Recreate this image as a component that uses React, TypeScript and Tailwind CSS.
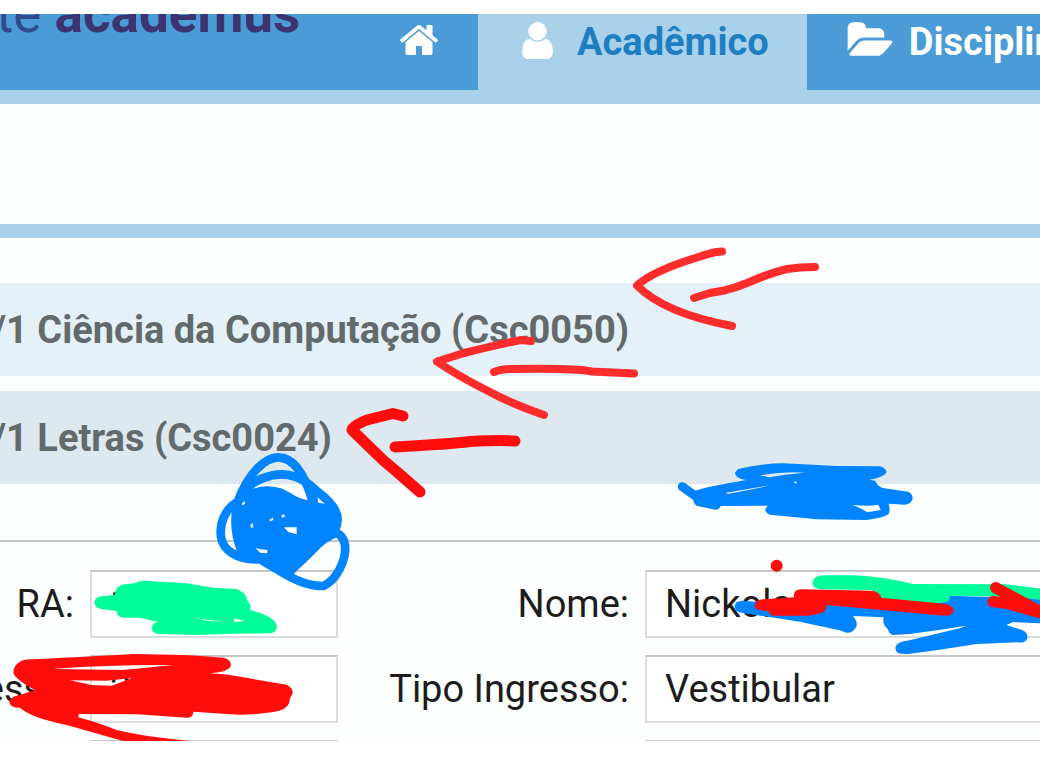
import React from 'react';

const ICONS = {
  home: 'M1472 992v480q0 26-19 45t-45 19h-384v-384h-256v384h-384q-26 0-45-19t-19-45v-480q0-1 .5-3t.5-3l575-474 575 474q1 2 1 6zm223-69l-62 74q-8 9-21 11h-3q-13 0-21-7l-692-577-692 577q-12 8-24 7-13-2-21-11l-62-74q-8-10-7-23.5t11-21.5l719-599q32-26 76-26t76 26l244 204v-195q0-14 9-23t23-9h192q14 0 23 9t9 23v408l219 182q10 8 11 21.5t-7 23.5z',
  user: 'M1536 1399q0 109-62.5 187t-150.5 78h-854q-88 0-150.5-78t-62.5-187q0-85 8.5-160.5t31.5-152 58.5-131 94-89 134.5-34.5q131 128 313 128t313-128q76 0 134.5 34.5t94 89 58.5 131 31.5 152 8.5 160.5zm-256-887q0 159-112.5 271.5t-271.5 112.5-271.5-112.5-112.5-271.5 112.5-271.5 271.5-112.5 271.5 112.5 112.5 271.5z',
  folder:
    'M1879 952q0 31-31 66l-336 396q-43 51-120.5 86.5t-143.5 35.5h-1088q-34 0-60.5-13t-26.5-43q0-31 31-66l336-396q43-51 120.5-86.5t143.5-35.5h1088q34 0 60.5 13t26.5 43zm-343-344v160h-832q-94 0-197 47.5t-164 119.5l-337 396-5 6q0-4-.5-12.5t-.5-12.5v-960q0-92 66-158t158-66h320q92 0 158 66t66 158v32h544q92 0 158 66t66 158z',
};

const courses = [
  { name: '/1 Ciência da Computação (Csc0050)', className: 'bg-[#e4f1f9]' },
  { name: '/1 Letras (Csc0024)', className: 'bg-[#dde8ef]' },
];

const Icon = ({
  path,
  viewBox = '0 0 1792 1792',
  className,
}: {
  path: string;
  viewBox?: string;
  className: string;
}) => (
  <svg
    viewBox={viewBox}
    className={`mb-1 shrink-0 fill-white ${className}`}
    aria-hidden="true"
  >
    <path d={path} />
  </svg>
);

const Field = ({
  id,
  label,
  value,
}: {
  id: string;
  label: string;
  value: string;
}) => (
  <>
    <label
      htmlFor={id}
      className="flex justify-end overflow-hidden whitespace-nowrap"
    >
      {label}
    </label>
    <input
      id={id}
      type="text"
      defaultValue={value}
      className="h-[68px] w-full min-w-0 border-2 border-[#dcdcdc] border-t-[#c6c6c8] bg-white px-[18px]"
    />
  </>
);

/* hand drawn arrows and scribbles over the page */
const Marks = () => (
  <svg
    viewBox="0 0 1040 741"
    className="pointer-events-none absolute top-0 left-0 h-[741px] w-[1040px] max-w-none"
    aria-hidden="true"
  >
    <g
      fill="none"
      stroke="#ff2c2c"
      strokeWidth="8"
      strokeLinecap="round"
      strokeLinejoin="round"
    >
      <path d="M722 251.5Q712 252 697 257.5Q653 271 637 285.5Q664 313 732 326" />
      <path d="M694 298L710 293L724 290.5Q735 288 747 283Q770 273 787 269Q800 267 815 267" />
      <path d="M531 341L521 340Q500 344 464 353L437 361.5Q458 376 490 392Q510 403 544 415" />
      <path d="M494 372Q501 369 512 369Q575 368 592 371.500L634 373.500" />
    </g>
    <g
      fill="none"
      stroke="#ff0d0d"
      strokeWidth="11"
      strokeLinecap="round"
      strokeLinejoin="round"
    >
      <path d="M403 416L393 413.500L367 420Q352 426 352 430L384 461L396 471L420 492" />
      <path d="M395 447Q450 444 470 441.500Q500 440 515 441" />
    </g>

    <g transform="translate(190 440) scale(.33333)">
      <g
        fill="none"
        stroke="#0084ff"
        strokeWidth="26"
        strokeLinecap="round"
        strokeLinejoin="round"
      >
        <path d="M145 180C175 100 225 52 265 52C310 52 345 105 368 185" />
        <path d="M155 160C190 118 250 97 295 105C340 112 365 140 385 157Q442 200 443 238Q442 270 415 290" />
        <path d="M145 185C105 205 88 250 93 290C98 330 140 358 200 358" />
        <path d="M235 370C290 410 350 440 400 438C440 420 470 360 465 315Q460 285 435 275" />
      </g>
      <path
        fill="#0084ff"
        fillRule="evenodd"
        d="M125 215L140 170L185 135L180 150Q215 135 250 140Q275 142 300 158Q330 178 358 181L365 150L400 160L445 210L452 250L445 290Q405 305 380 335Q345 370 325 388Q310 408 290 412Q250 400 205 370L143 340Q118 280 125 215ZM282 262L320 262L320 283L295 276ZM196 324L212 328L232 330L232 340L210 338ZM382 172L405 191L385 188ZM274 227L282 222L285 230L277 233ZM181 254L188 250L190 262L183 263ZM238 239L249 233L250 240L241 244ZM155 189L164 184L165 192L157 196Z"
      />
    </g>

    <g transform="translate(670 230) scale(.33333)" fill="#0084ff">
      <path
        d="M37 770L90 808"
        stroke="#0084ff"
        strokeWidth="27"
        strokeLinecap="round"
      />
      <path
        fillRule="evenodd"
        d="M205 717Q280 700 340 700L500 708L630 709Q650 715 649 728Q640 742 598 749L616 753Q622 768 638 774L715 785Q728 792 728 805Q725 823 705 824L656 821Q662 842 655 853Q640 864 590 870L440 868L300 854Q285 848 286 838Q290 826 302 824L292 827L152 828Q148 840 135 839L80 827Q68 820 70 800L76 782Q110 770 228 750Q195 745 195 728ZM270 736Q340 723 405 728Q340 733 300 742ZM165 789L300 766Q240 780 175 791ZM548 825Q600 830 625 824L632 840L592 847Q575 835 548 825ZM371 756L378 754L382 760L374 760Z"
      />
    </g>

    <g transform="translate(0 530) scale(.33333)" fillRule="evenodd">
      <path
        fill="#00ff99"
        d="M283 218Q285 198 310 198L345 195Q345 165 380 162L405 160Q415 152 430 152L560 160L640 173L710 177Q740 189 742 212Q757 225 750 240Q828 260 831 290Q828 310 805 310L700 311L590 315L480 312Q455 310 456 295Q457 277 475 276L420 263L370 263Q350 260 350 243L310 238Q285 236 283 218ZM580 264L670 275Q620 275 580 264ZM702 265L735 273L703 276Z"
      />
      <path
        fill="#ff0d0d"
        d="M40 425Q45 390 90 388Q200 383 400 372Q560 373 670 383Q693 388 693 405Q690 425 630 430Q680 432 730 442L860 464Q880 475 878 490Q868 505 867 520Q860 540 820 546Q740 558 690 553L580 545Q580 563 560 563L410 553L237 552L235 562Q300 580 350 600Q430 620 580 634L373 634L200 585Q90 562 60 533Q28 533 28 515Q30 500 60 495L105 480Q40 445 40 425ZM165 416Q350 403 520 405Q420 415 370 420Q250 418 165 417ZM210 451L320 452L395 444Q365 456 335 467L275 465Z"
      />
    </g>

    <g transform="translate(693 530) scale(.33333)">
      <path
        fill="#0084ff"
        d="M125 230Q125 212 150 212L300 225L400 200L790 198L1041 205L1041 280L960 276L940 285L985 299Q1005 305 1003 325Q1000 340 975 337L850 342Q740 360 645 372Q607 375 607 353Q610 335 650 331L800 295L820 287Q740 300 650 312L600 315Q587 312 585 298Q567 285 572 262L480 258Q495 275 490 290Q480 310 460 308L440 301L320 275L145 248Q127 246 125 230Z"
      />
      <path
        fill="#00ff99"
        d="M358 158Q360 137 395 136L480 136Q570 140 660 162L940 163L1046 176L1046 210L960 200L770 197L768 212Q750 222 700 218L540 205L540 180L385 178Q358 176 358 158Z"
      />
      <path
        fill="#ff0d0d"
        d="M185 228Q188 208 210 208L303 202Q300 178 325 178L540 182Q562 188 565 203L760 222Q782 230 782 242Q778 258 755 257L400 225Q402 248 380 250L350 257L240 257Q228 252 225 243Q185 242 185 228Z"
      />
      <path
        d="M908 173L1045 247M900 215L940 219L1045 249"
        fill="none"
        stroke="#ff0d0d"
        strokeWidth="34"
        strokeLinecap="round"
      />
      <circle cx="251" cy="107" r="18" fill="#ff0d0d" />
    </g>
  </svg>
);

const App = () => {
  return (
    <div className="relative overflow-hidden bg-white pt-3.5 pb-7 font-['Roboto','Liberation_Sans',sans-serif] text-[38px] leading-[56px] text-[#1c1c1c]">
      <header className="flex overflow-hidden border-b-[14px] border-[#a9d1e9]">
        <div className="flex h-[76px] min-w-0 flex-1 overflow-hidden bg-[#4a9bd6]">
          <h1 className="-mt-7 -ml-1 text-[53px] whitespace-nowrap text-[#3c3470]">
            <span className="font-normal text-[#2f4b8c]">te</span>{' '}
            <b>academus</b>
          </h1>
        </div>
        <nav className="flex w-[680px] shrink-0 font-bold whitespace-nowrap">
          <a
            href="#inicio"
            aria-label="Início"
            className="flex h-[76px] shrink-0 items-center bg-[#4a9bd6] px-[38px] pb-5"
          >
            <Icon path={ICONS.home} className="size-[42px]" />
          </a>
          <a
            href="#academico"
            className="flex h-[76px] shrink-0 items-center gap-[18px] bg-[#a9d1e9] px-[38px] pb-5 text-[#1d7fc2]"
          >
            <Icon path={ICONS.user} className="size-[43px]" />
            Acadêmico
          </a>
          <a
            href="#disciplinas"
            className="flex h-[76px] shrink-0 items-center gap-4 bg-[#4a9bd6] px-[38px] pb-5 text-white"
          >
            <Icon
              path={ICONS.folder}
              viewBox="-112 0 2016 1792"
              className="h-[43px] w-12"
            />
            Disciplinas
          </a>
        </nav>
      </header>

      <main className="bg-[#fdfefe]">
        <div className="h-[134px] border-b-[14px] border-[#a9d1e9]" />
        <ul className="space-y-[15px] pt-[45px] pb-14">
          {courses.map(({ name, className }) => (
            <li
              key={name}
              className={`flex h-[93px] items-center font-bold whitespace-nowrap text-[#636a6b] ${className}`}
            >
              <span className="-ml-2">{name}</span>
            </li>
          ))}
        </ul>
        <form className="h-[201px] overflow-hidden border-t-2 border-[#c4c5c8] pt-7">
          <div className="-mr-1 grid grid-cols-[74px_248px_275px_minmax(0,1fr)] items-center gap-x-4 gap-y-[17px]">
            <Field id="ra" label="RA:" value="1" />
            <Field id="nome" label="Nome:" value="Nickolas" />
            <Field id="ingresso" label="Ingresso:" value="20" />
            <Field id="tipo" label="Tipo Ingresso:" value="Vestibular" />
            <Field id="campo5" label="" value="" />
            <Field id="campo6" label="" value="" />
          </div>
        </form>
      </main>
      <Marks />
    </div>
  );
};

export default App;
